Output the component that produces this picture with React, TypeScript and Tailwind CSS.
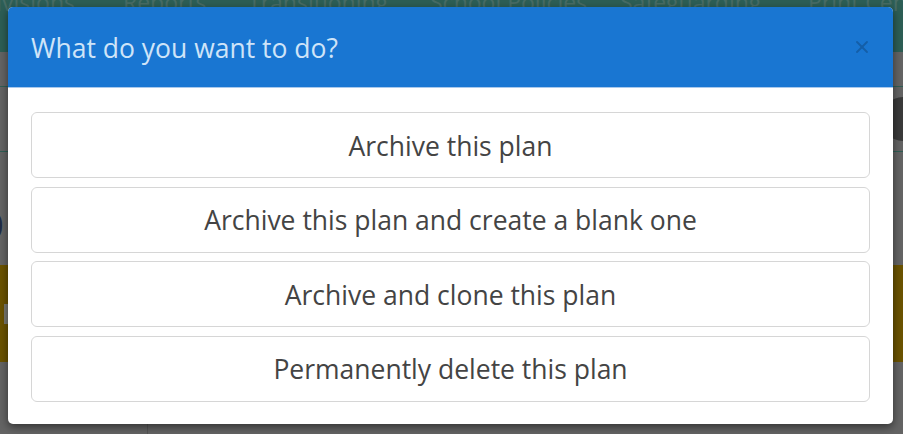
import { X } from "lucide-react";

const navItems = [
  { label: "Divisions", w: "w-[173px] -ml-[50px] text-right pr-[48px]" },
  { label: "Reports", w: "w-[125px]" },
  { label: "Transitioning", w: "w-[182px]" },
  { label: "School Policies", w: "w-[190px]" },
  { label: "Safeguarding", w: "w-[188px]" },
  { label: "Print Centre", w: "w-[120px]" },
];

const actions = [
  "Archive this plan",
  "Archive this plan and create a blank one",
  "Archive and clone this plan",
  "Permanently delete this plan",
];

export default function App() {
  return (
    <div
      className="relative h-[434px] w-[903px] overflow-hidden bg-[#c8c8c8]"
      style={{ fontFamily: '"Open Sans", "Noto Sans", sans-serif' }}
    >
      {/* page behind the modal */}
      <div className="flex h-[52px] items-start overflow-hidden bg-[#5abcaa] text-[23px] leading-none text-[#8fd8ca]">
        {navItems.map((n) => (
          <span key={n.label} className={`mt-[-9px] shrink-0 whitespace-nowrap ${n.w}`}>
            {n.label}
          </span>
        ))}
      </div>
      <div className="flex h-[382px] flex-col">
        <div className="mt-[34px] flex h-[66px] items-center justify-end border-y border-[#5ebcab]">
          <div className="mr-[-22px] h-[44px] w-[44px] rounded-full bg-[#747474]" />
        </div>
        <div className="mt-[53px] flex h-[40px] items-center">
          <span className="ml-[-16px] text-[34px] font-semibold text-[#3e5488]">0</span>
        </div>
        <div className="mt-[20px] flex h-[97px] items-center bg-[#d6a600]">
          <div className="ml-[4px] h-[20px] w-[4px] bg-[#f0f0e0]" />
        </div>
        <div className="flex-1" />
        <div className="ml-[147px] h-[10px] w-px bg-[#aaa]" />
      </div>

      {/* backdrop */}
      <div className="absolute inset-0 bg-black/50" />

      {/* modal */}
      <div className="absolute left-[8px] top-[7px] w-[885px] overflow-hidden rounded-[5px] bg-white shadow-[0_3px_9px_rgba(0,0,0,0.5)]">
        <div className="flex h-[81px] items-center justify-between border-b border-[#a9c9ec] bg-[#1976d2] pl-[23px] pr-[21px]">
          <h4 className="pt-[2px] text-[26.5px] leading-none text-[#cfe4f8]">What do you want to do?</h4>
          <X className="h-[20px] w-[20px] text-[#145ea8]" strokeWidth={2.2} />
        </div>
        <div className="flex flex-col gap-[8.5px] px-[23px] pb-[22.5px] pt-[24px]">
          {actions.map((a) => (
            <button
              key={a}
              className="flex h-[66px] items-center justify-center rounded-[6px] border border-[#d6d6d6] bg-white pt-[3px] text-[26.5px] text-[#444]"
            >
              {a}
            </button>
          ))}
        </div>
      </div>
    </div>
  );
}
